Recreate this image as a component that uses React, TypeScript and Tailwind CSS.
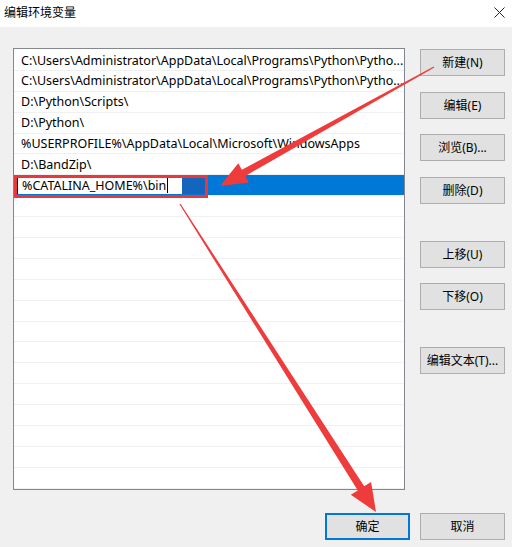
import React from 'react';

const paths = [
  'C:\\Users\\Administrator\\AppData\\Local\\Programs\\Python\\Pytho...',
  'C:\\Users\\Administrator\\AppData\\Local\\Programs\\Python\\Pytho...',
  'D:\\Python\\Scripts\\',
  'D:\\Python\\',
  '%USERPROFILE%\\AppData\\Local\\Microsoft\\WindowsApps',
  'D:\\BandZip\\',
];

const TOTAL_ROWS = 21;

// tapered arrow: thin tail, thick end, triangular head
function arrowPoints(x1: number, y1: number, x2: number, y2: number, w0: number, w1: number, headLen: number, headW: number) {
  const dx = x2 - x1;
  const dy = y2 - y1;
  const len = Math.hypot(dx, dy);
  const ux = dx / len;
  const uy = dy / len;
  const nx = uy;
  const ny = -ux;
  const bx = x2 - ux * headLen;
  const by = y2 - uy * headLen;
  const pts = [
    [x1 + nx * w0, y1 + ny * w0],
    [bx + nx * w1, by + ny * w1],
    [bx + nx * headW, by + ny * headW],
    [x2, y2],
    [bx - nx * headW, by - ny * headW],
    [bx - nx * w1, by - ny * w1],
    [x1 - nx * w0, y1 - ny * w0],
  ];
  return pts.map(p => `${p[0].toFixed(1)},${p[1].toFixed(1)}`).join(' ');
}

const Button: React.FC<{ label: string; className?: string; primary?: boolean }> = ({ label, className = '', primary }) => (
  <div
    className={`w-[85px] h-[27px] flex items-center justify-center bg-[#e1e1e1] text-[12px] text-black ${
      primary ? 'border-2 border-[#0078d7]' : 'border border-[#adadad]'
    } ${className}`}
  >
    {label}
  </div>
);

export default function App() {
  return (
    <div
      className="relative w-[512px] h-[547px] bg-[#f0f0f0] overflow-hidden"
      style={{ fontFamily: '"Noto Sans", "Noto Sans CJK SC", sans-serif' }}
    >
      <div className="h-[27px] bg-white flex items-start justify-between pl-[4px] pr-[7px] pt-[3px]">
        <span className="text-[12px] leading-[18px] text-black" style={{ fontFamily: '"Noto Sans CJK SC", sans-serif' }}>编辑环境变量</span>
        <svg width="11" height="11" viewBox="0 0 11 11" className="mt-[4px]">
          <path d="M0.5 0.5 L10.5 10.5 M10.5 0.5 L0.5 10.5" stroke="#222" strokeWidth="1" />
        </svg>
      </div>

      <div className="flex pl-[13px] pt-[21px]">
        <div className="relative w-[392px] h-[442px] border border-[#828790] bg-white pt-[1px] overflow-hidden">
          {Array.from({ length: TOTAL_ROWS }).map((_, i) => {
            if (i === 6) {
              return (
                <div key={i} className="h-[20.9px] flex items-center bg-[#0078d7] border-b border-[#f0f0f0]">
                  <div className="ml-[3px] h-[18px] w-[165px] bg-white border-l border-black flex items-center pl-[4px] pt-[1px] text-[12.5px] text-black leading-none">
                    %CATALINA_HOME%\bin
                    <span className="ml-[1px] w-[1px] h-[15px] bg-black" />
                  </div>
                  <div className="h-[18px] w-[23px] bg-[#1466bd]" />
                </div>
              );
            }
            return (
              <div
                key={i}
                className="h-[20.9px] flex items-center pl-[7px] pt-[2px] border-b border-[#f0f0f0] text-[12.5px] text-black whitespace-nowrap"
              >
                {paths[i] ?? ''}
              </div>
            );
          })}
        </div>

        <div className="ml-[15px] pt-[1px] flex flex-col">
          <Button label="新建(N)" />
          <Button label="编辑(E)" className="mt-[16px]" />
          <Button label="浏览(B)..." className="mt-[15px]" />
          <Button label="删除(D)" className="mt-[16px]" />
          <Button label="上移(U)" className="mt-[37px]" />
          <Button label="下移(O)" className="mt-[15px]" />
          <Button label="编辑文本(T)..." className="mt-[37px]" />
        </div>
      </div>

      <div className="flex justify-end gap-[10px] pr-[7px] mt-[23px]">
        <Button label="确定" primary />
        <Button label="取消" />
      </div>

      {/* annotations */}
      <div className="absolute left-[14px] top-[175px] w-[194px] h-[23px] border-[3px] border-[#e8383d] pointer-events-none" />
      <svg className="absolute inset-0 pointer-events-none" width="512" height="547" viewBox="0 0 512 547">
        <polygon points={arrowPoints(434, 67, 220, 186, 0.6, 3.5, 27, 11)} fill="#ee3b3b" />
        <polygon points={arrowPoints(180, 204, 376, 512, 0.6, 3.8, 28, 12)} fill="#ee3b3b" />
      </svg>
    </div>
  );
}
